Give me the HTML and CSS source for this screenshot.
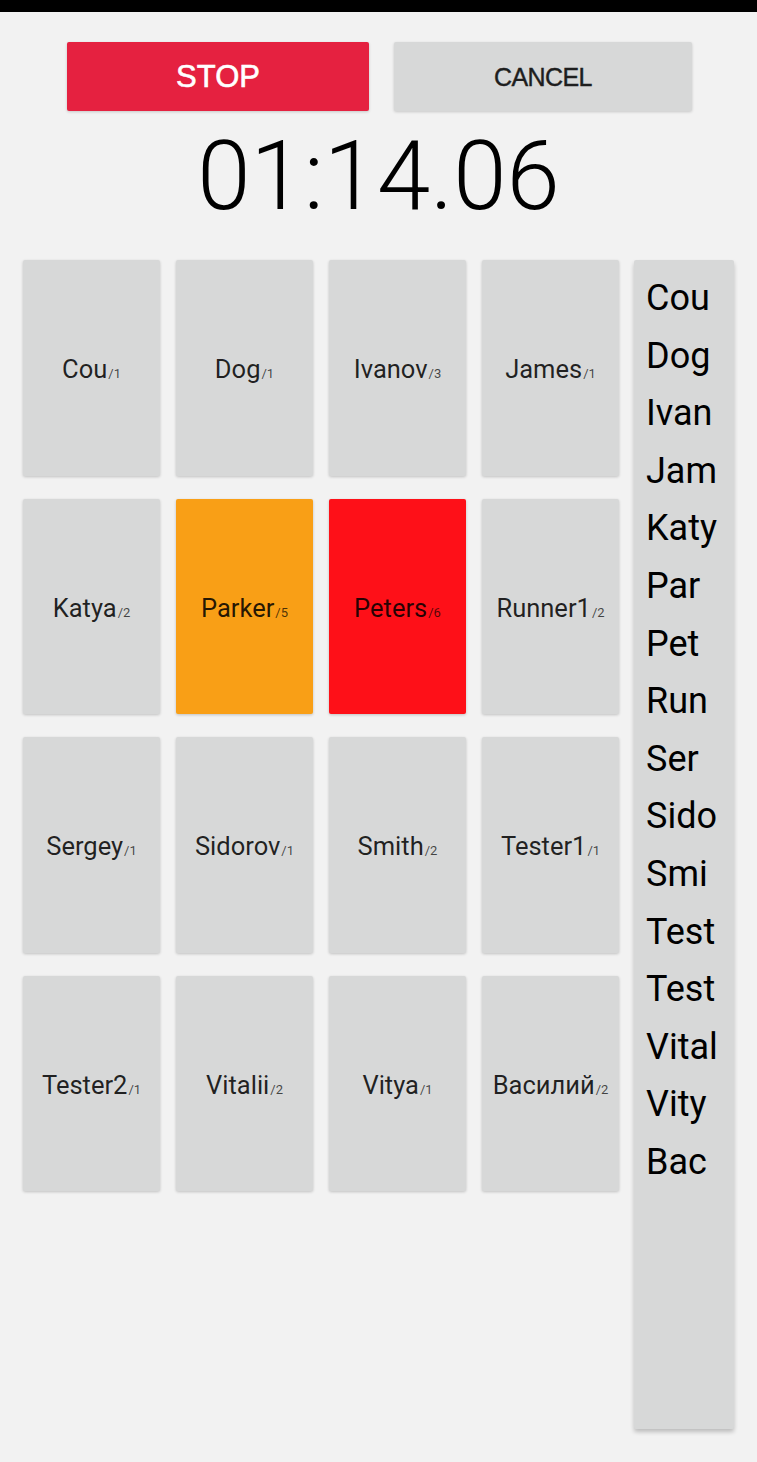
FILE: index.html
```html
<!DOCTYPE html>
<html>
<head>
<meta charset="utf-8">
<link rel="stylesheet" href="styles.css">
</head>
<body>
<div class="statusbar"></div>
<div class="actions">
  <button class="btn btn-stop">STOP</button>
  <button class="btn btn-cancel">CANCEL</button>
</div>
<div class="timer">01:14.06</div>
<div class="main">
  <div class="grid">
    <div class="tile">Cou<span class="sub">/1</span></div>
    <div class="tile">Dog<span class="sub">/1</span></div>
    <div class="tile">Ivanov<span class="sub">/3</span></div>
    <div class="tile">James<span class="sub">/1</span></div>
    <div class="tile">Katya<span class="sub">/2</span></div>
    <div class="tile tile-orange">Parker<span class="sub">/5</span></div>
    <div class="tile tile-red">Peters<span class="sub">/6</span></div>
    <div class="tile">Runner1<span class="sub">/2</span></div>
    <div class="tile">Sergey<span class="sub">/1</span></div>
    <div class="tile">Sidorov<span class="sub">/1</span></div>
    <div class="tile">Smith<span class="sub">/2</span></div>
    <div class="tile">Tester1<span class="sub">/1</span></div>
    <div class="tile">Tester2<span class="sub">/1</span></div>
    <div class="tile">Vitalii<span class="sub">/2</span></div>
    <div class="tile">Vitya<span class="sub">/1</span></div>
    <div class="tile">Василий<span class="sub">/2</span></div>
  </div>
  <div class="index">
    <div class="idx">Cou</div>
    <div class="idx">Dog</div>
    <div class="idx">Ivan</div>
    <div class="idx">Jam</div>
    <div class="idx">Katy</div>
    <div class="idx">Par</div>
    <div class="idx">Pet</div>
    <div class="idx">Run</div>
    <div class="idx">Ser</div>
    <div class="idx">Sido</div>
    <div class="idx">Smi</div>
    <div class="idx">Test</div>
    <div class="idx">Test</div>
    <div class="idx">Vital</div>
    <div class="idx">Vity</div>
    <div class="idx">Bac</div>
  </div>
</div>
</body>
</html>
```

FILE: styles.css
```css
html, body {
  margin: 0;
  padding: 0;
  background: #f2f2f2;
  font-family: Roboto, "Liberation Sans", sans-serif;
  width: 757px;
  height: 1462px;
  overflow: hidden;
}
.statusbar {
  height: 12px;
  background: #000;
}
.actions {
  display: flex;
  justify-content: center;
  gap: 25px;
  padding-top: 30px;
  padding-left: 2px;
}
.btn {
  height: 69px;
  border: none;
  border-radius: 2px;
  font-family: "Liberation Sans", Arial, sans-serif;
  font-weight: 400;
  padding: 0;
  box-shadow: 0 1px 3px rgba(0,0,0,0.18);
}
.btn-stop {
  background: #e52140;
  color: #fff;
  width: 302px;
  font-size: 31px;
  -webkit-text-stroke: 0.6px #fff;
}
.btn-cancel {
  background: #d7d8d8;
  color: #1e1e1e;
  width: 298px;
  font-size: 25px;
  letter-spacing: -0.6px;
  -webkit-text-stroke: 0.4px #1e1e1e;
  padding-top: 2px;
}
.timer {
  text-align: center;
  font-weight: 300;
  font-size: 96px;
  line-height: 130px;
  height: 130px;
  color: #000;
}
.main {
  display: flex;
  gap: 15px;
  padding: 19px 0 0 23px;
}
.grid {
  display: grid;
  grid-template-columns: repeat(4, 137px);
  grid-auto-rows: 215.5px;
  column-gap: 16px;
  row-gap: 23px;
  align-content: start;
}
.tile {
  background: #d7d8d8;
  border-radius: 2px;
  box-shadow: 0 1px 3px rgba(0,0,0,0.2);
  display: flex;
  align-items: baseline;
  justify-content: center;
  padding-top: 94px;
  box-sizing: border-box;
  font-size: 25.5px;
  line-height: 30px;
  color: rgba(0,0,0,0.85);
  white-space: nowrap;
}
.sub {
  font-size: 13px;
  margin-left: 1px;
  color: rgba(0,0,0,0.7);
}
.tile-orange {
  background: #f99f16;
}
.tile-red {
  background: #fe1018;
}
.index {
  width: 100px;
  height: 1169px;
  background: #d7d8d8;
  border-radius: 2px;
  box-shadow: 0 3px 4px rgba(0,0,0,0.22);
  padding-top: 10px;
  box-sizing: border-box;
}
.idx {
  font-size: 36px;
  line-height: 57.6px;
  padding-left: 12px;
  color: #000;
}
```
